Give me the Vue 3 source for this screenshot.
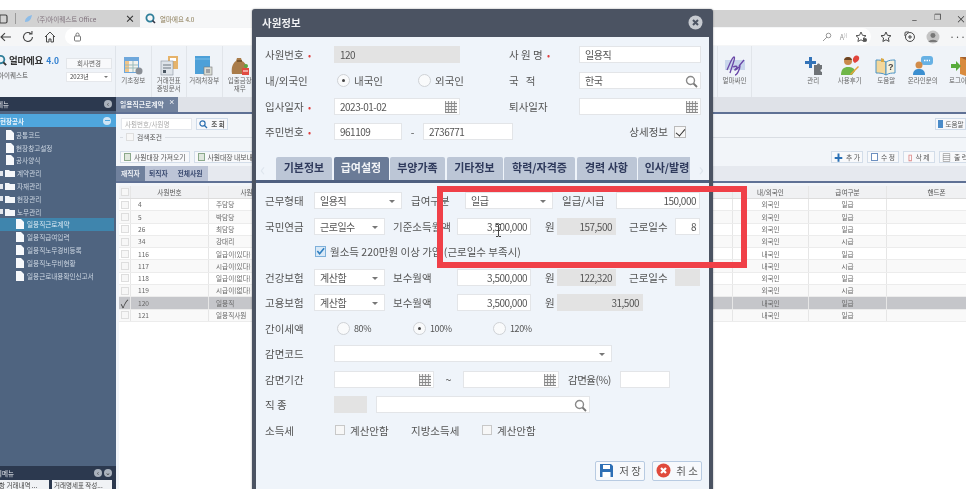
<script setup>
const tree = [
  { t: '공통코드', k: 'doc1' }, { t: '현장창고설정', k: 'doc1' }, { t: '공사양식', k: 'doc1' },
  { t: '계약관리', k: 'dir' }, { t: '자재관리', k: 'dir' }, { t: '현장관리', k: 'dir' }, { t: '노무관리', k: 'dir' },
  { t: '일용직근로계약', k: 'doc2', on: true }, { t: '일용직급여입력', k: 'doc2' }, { t: '일용직노무경비등록', k: 'doc2' },
  { t: '일용직노무비현황', k: 'doc2' }, { t: '일용근로내용확인신고서', k: 'doc2' }
]
const rows = [
  ['4', '주담당', '외국인', '일급'], ['5', '박담당', '외국인', '일급'], ['26', '최담당', '외국인', '일급'],
  ['34', '강대리', '외국인', '시급'], ['116', '일급이(있다)', '내국인', '일급'], ['117', '시급이(있다)', '내국인', '시급'],
  ['118', '일급이(없다)', '외국인', '일급'], ['119', '시급이(없다)', '외국인', '시급'],
  ['120', '일용직', '내국인', '일급'], ['121', '일용직사원', '내국인', '일급']
]
const tabs = [
  { t: '기본정보', c: 'tw1' }, { t: '급여설정', c: 'tw2 on' }, { t: '부양가족', c: 'tw3' }, { t: '기타정보', c: 'tw4' },
  { t: '학력/자격증', c: 'tw5' }, { t: '경력 사항', c: 'tw6' }, { t: '인사/발령', c: 'tw7' }
]
</script>

<template>
  <div class="screen">
    <div class="topgap"></div>
    <div class="tabbar">
      <svg class="tabicon" width="12" height="10" viewBox="0 0 12 10"><rect x="1" y="1" width="10" height="8" rx="1.5" fill="none" stroke="#444" stroke-width="1.2"/><path d="M4 1v8" stroke="#444"/></svg>
      <i class="tabsep"></i>
      <div class="btab">
        <svg width="10" height="10" viewBox="0 0 10 10"><path d="M2 8c0-4 3-6 7-7-1 4-2 7-7 7z" fill="#8cbce8"/></svg>
        <span>(주)아이퀘스트 Office</span><b>×</b>
      </div>
      <div class="btab act">
        <svg width="11" height="11" viewBox="0 0 11 11"><circle cx="5" cy="5" r="3.6" fill="none" stroke="#2f7f9a" stroke-width="1.8"/><path d="M7.5 7.5L10 10" stroke="#334" stroke-width="1.6"/></svg>
        <span>얼마에요 4.0</span>
      </div>
      <div class="winbtns"><span>–</span><span class="rst">❐</span><span>×</span></div>
    </div>
    <div class="toolbar">
      <svg width="14" height="12" viewBox="0 0 14 12"><path d="M12 6H2M6 2L2 6l4 4" fill="none" stroke="#444" stroke-width="1.1"/></svg>
      <svg width="14" height="14" viewBox="0 0 14 14"><path d="M11.5 7a4.5 4.5 0 1 1-1.3-3.2M11 1v3H8" fill="none" stroke="#444" stroke-width="1.1"/></svg>
      <svg width="14" height="14" viewBox="0 0 14 14"><path d="M2 7l5-5 5 5M3.5 6v6h2.5V9h2v3h2.500V6" fill="none" stroke="#444" stroke-width="1"/></svg>
      <div class="addr">
        <svg width="9" height="10" viewBox="0 0 9 10"><rect x="1.500" y="4" width="6" height="5" rx="1" fill="none" stroke="#777"/><path d="M3 4V2.500a1.500 1.500 0 0 1 3 0V4" fill="none" stroke="#777"/></svg>
        <span class="grow"></span>
        <svg width="10" height="10" viewBox="0 0 10 10"><circle cx="6.500" cy="3.500" r="2.300" fill="none" stroke="#999"/><path d="M5 5L1 9" stroke="#999"/></svg>
        <span class="aa">A<sup>))</sup></span>
        <svg width="13" height="12" viewBox="0 0 13 12"><path d="M6 1l1.500 3.300 3.500.4-2.600 2.300.7 3.500L6 8.800 2.900 10.500l.7-3.500L1 4.700l3.500-.4z" fill="none" stroke="#555"/><circle cx="10" cy="9" r="2" fill="#555"/></svg>
      </div>
      <svg class="rt1" width="13" height="12" viewBox="0 0 13 12"><path d="M6 1l1.500 3.300 3.500.4-2.600 2.300.7 3.500L6 8.800 2.900 10.500l.7-3.500L1 4.700l3.500-.4z" fill="none" stroke="#444"/></svg>
      <svg class="rt2" width="13" height="13" viewBox="0 0 13 13"><circle cx="7" cy="7" r="4.500" fill="none" stroke="#444"/><path d="M2 6V3a1 1 0 0 1 1-1h3M7 5v4M5 7h4" fill="none" stroke="#444"/></svg>
      <svg class="rt3" width="14" height="14" viewBox="0 0 14 14"><circle cx="7" cy="7" r="6.500" fill="#c4c4c4"/><circle cx="7" cy="5.500" r="2.500" fill="#777"/><path d="M2.500 12c1-3 8-3 9 0z" fill="#777"/></svg>
      <span class="dots">···</span>
    </div>

    <header class="apphead">
      <div class="logo">
        <div class="logomain">
          <svg width="12" height="12" viewBox="0 0 13 13"><circle cx="5" cy="6" r="4" fill="none" stroke="#2f7f9a" stroke-width="2"/><path d="M8 9l3 3" stroke="#333" stroke-width="2"/></svg>
          <strong>얼마에요</strong><em>4.0</em>
        </div>
        <div class="logosub">아이퀘스트</div>
        <div class="logobtns">
          <span class="lbtn">회사변경</span>
          <span class="lsel">2023년<i class="car small"></i></span>
        </div>
      </div>
      <div class="hitem">
        <svg width="22" height="20" viewBox="0 0 22 20"><rect x="2" y="1" width="15" height="16" fill="#6fa8dc"/><path d="M3 5h13v11H3z" fill="#f2f2ee"/><path d="M3 5h4v11H3z" fill="#f0c58a"/><path d="M3 9h13M3 12h13M11 5v11" stroke="#9bb"/><circle cx="17" cy="15" r="3.500" fill="#8a8f96"/></svg>
        <span>기초정보</span>
      </div>
      <div class="hitem">
        <svg width="22" height="20" viewBox="0 0 22 20"><rect x="10" y="0" width="10" height="13" fill="#e6b36a"/><rect x="12" y="2" width="6" height="3" fill="#fff"/><rect x="3" y="5" width="12" height="14" fill="#dfe4ea" stroke="#8a939e" stroke-width=".6"/><path d="M5 9h8M5 12h8" stroke="#6c7680"/><rect x="5" y="14" width="3" height="3" fill="#4a5662"/></svg>
        <span>거래전표<br>증빙문서</span>
      </div>
      <div class="hitem">
        <svg width="22" height="20" viewBox="0 0 22 20"><rect x="2" y="0" width="15" height="18" fill="#4da0d8"/><path d="M2 3h15" stroke="#7cc0ea"/><rect x="11" y="11" width="8" height="8" fill="#d9dcd4" stroke="#777" stroke-width=".6"/><path d="M13 14h4M13 16h4" stroke="#667"/></svg>
        <span>거래처장부</span>
      </div>
      <div class="hitem">
        <svg width="22" height="20" viewBox="0 0 22 20"><path d="M8 2h4l1 3c4 2 6 6 5 13H3C2 11 4 7 7 5z" fill="#a97c4a"/><path d="M8 5h5" stroke="#6b4a24" stroke-width="1.500"/><rect x="13" y="12" width="7" height="7" fill="#e14b42"/><path d="M14 15h5" stroke="#fff"/><circle cx="17" cy="10" r="2" fill="#5aa544"/></svg>
        <span>입출금장<br>재무</span>
      </div>
      <div class="hgap"></div>
      <div class="hitem sign">
        <svg width="24" height="22" viewBox="0 0 24 22"><rect x="2" y="5" width="20" height="10" fill="#c9d6ec"/><path d="M4 15c3-6 5-13 7-13S8 14 7 18M10 12c2-1 4-1 4 0s-3 3-2 3 4-3 5-4c0 3-3 9-5 9M16 11l5-6" fill="none" stroke="#6a48a8" stroke-width="1.300"/></svg>
        <span>얼마싸인</span>
      </div>
      <div class="hgap2"></div>
      <div class="hitem plain">
        <svg width="22" height="20" viewBox="0 0 22 20"><path d="M7 1h3v4h4v3h-4v4H7V8H3V5h4z" fill="#3373b8"/><path d="M12 9h3c0-2 3-2 3 0h2v4c-2 0-2 3 0 3v3h-8z" fill="#6f7377"/></svg>
        <span>관리</span>
      </div>
      <div class="hitem plain">
        <svg width="22" height="22" viewBox="0 0 22 22"><path d="M15 2c1-2 4-2 5 0 1 3-2 5-4 6-2-1-3-4-1-6z" fill="#e1443c"/><circle cx="9" cy="6" r="4" fill="#c98a4c"/><path d="M5 5c1-4 7-4 8 0z" fill="#6b4424"/><path d="M2 20c0-6 3-8 7-8s6 1 7 4l-3 4z" fill="#6fb648"/><path d="M11 19l8-8 1 1-8 8z" fill="#e8a33c"/></svg>
        <span>사용후기</span>
      </div>
      <div class="hitem plain">
        <svg width="22" height="20" viewBox="0 0 22 20"><path d="M1 4c3 0 7 0 10 2v13c-3-2-7-2-10-2z" fill="#f3d79a" stroke="#4b93c4"/><path d="M11 6c3-2 6-2 9-2v13c-3 0-6 0-9 2z" fill="#f6f1de" stroke="#4b93c4"/><path d="M6 2l3 1v3H6z" fill="#d9a744"/><text x="13" y="14" font-size="9" font-weight="700" fill="#444" font-family="Liberation Sans">?</text></svg>
        <span>도움말</span>
      </div>
      <div class="hitem plain">
        <svg width="22" height="20" viewBox="0 0 22 20"><rect x="9" y="0" width="12" height="9" rx="3" fill="#67b1e4"/><path d="M12 4.500h6" stroke="#fff" stroke-dasharray="1.500 1" stroke-width="1.500"/><circle cx="7" cy="9" r="3.500" fill="#d28c4a"/><path d="M1 19c0-5 3-6 6-6s6 1 6 6z" fill="#3b8fd0"/></svg>
        <span>온라인문의</span>
      </div>
      <div class="hitem plain last">
        <svg width="22" height="20" viewBox="0 0 22 20"><rect x="10" y="1" width="10" height="17" fill="#a3612f"/><path d="M10 1l6 3v16l-6-2z" fill="#d98b3e"/><path d="M1 8h5V5l5 5-5 5v-3H1z" fill="#58ab3c"/></svg>
        <span>로그아웃</span>
      </div>
    </header>

    <div class="body">
      <aside class="side">
        <div class="sidehead"><span>메뉴</span><i class="roundbtn">‹</i></div>
        <div class="sidesel"><span>현장공사</span><i class="minus"></i></div>
        <ul class="tree">
          <li v-for="n in tree" :key="n.t" :class="[n.k, { on: n.on }]">
            <svg v-if="n.k === 'dir'" width="10" height="8" viewBox="0 0 10 8"><path d="M0 1h4l1 1h5v6H0z" fill="#f4f6f9"/></svg>
            <svg v-else width="8" height="10" viewBox="0 0 8 10"><path d="M0 0h5l3 3v7H0z" fill="#f6f8fb"/></svg>
            <span>{{ n.t }}</span>
          </li>
        </ul>
        <div class="sideend">
          <div class="sidehead2"><span>회메뉴</span><i class="roundbtn">‹</i><i class="roundbtn">⌄</i></div>
          <div class="sidebtns"><span>항 거래내역 ...</span><span>거래명세표 작성...</span></div>
        </div>
      </aside>

      <main class="main">
        <div class="mtabs"><div class="mtab">일용직근로계약<sup>×</sup></div></div>
        <div class="search">
          <span class="sinput">사원번호/사원명</span>
          <span class="sbtn">
            <svg width="9" height="9" viewBox="0 0 9 9"><circle cx="3.500" cy="3.500" r="2.600" fill="none" stroke="#2b6fb0" stroke-width="1.200"/><path d="M5.500 5.500L8 8" stroke="#2b6fb0" stroke-width="1.200"/></svg>
            조 회
          </span>
          <span class="grow"></span>
          <span class="sbtn help"><i class="book"></i>도움말</span>
        </div>
        <div class="legend"><i class="cb"></i><span>검색조건</span><em></em></div>
        <div class="actions">
          <span class="abtn"><i class="xls"></i>사원대장 가져오기</span>
          <span class="abtn"><i class="xls"></i>사원대장 내보내기</span>
          <span class="grow"></span>
          <span class="abtn a2"><b class="plus">✚</b>추 가</span>
          <span class="abtn a2"><i class="ed"></i>수 정</span>
          <span class="abtn a2"><b class="trash">▯</b>삭 제</span>
          <span class="abtn a2 pr"><b class="plus grey">▤</b>출 력</span>
        </div>
        <div class="gtabs">
          <span class="gt on">재직자</span><span class="gt">퇴직자</span><span class="gt w">전체사원</span>
        </div>
        <div class="grid">
          <div class="gr gh">
            <span><i class="cb"></i></span><span>사원번호</span><span>사원명</span><span></span><span></span><span>내/외국인</span><span>급여구분</span><span>핸드폰</span>
          </div>
          <div v-for="r in rows" :key="r[0]" class="gr" :class="{ sel: r[0] === '120' }">
            <span><i v-if="r[0] !== '120'" class="cb"></i><b v-else class="tick">✓</b></span>
            <span class="lft">{{ r[0] }}</span><span class="lft">{{ r[1] }}</span><span></span><span></span>
            <span>{{ r[2] }}</span><span>{{ r[3] }}</span><span></span>
          </div>
        </div>
      </main>
    </div>

    <section class="modal">
      <div class="mhead"><span>사원정보</span><svg width="15" height="15" viewBox="0 0 15 15"><circle cx="7.500" cy="7.500" r="7" fill="#c6cad0"/><path d="M5 5l5 5M10 5l-5 5" stroke="#4b5362" stroke-width="2"/></svg></div>
      <div class="mbody">
        <div class="top">
          <div class="row">
            <label class="l69">사원번호 <u>•</u></label><span class="f gray w126">120</span>
            <label class="l70 ml49">사 원 명 <u>•</u></label><span class="f w122">일용직</span>
          </div>
          <div class="row">
            <label class="l69">내/외국인</label>
            <span class="radio w83"><i class="rd on"></i>내국인</span><span class="radio w92"><i class="rd"></i>외국인</span>
            <label class="l70">국 &nbsp; 적</label>
            <span class="f w122">한국<svg class="mag" width="13" height="13" viewBox="0 0 13 13"><circle cx="5.500" cy="5.500" r="4" fill="none" stroke="#8a8a8a" stroke-width="1.400"/><path d="M8.500 8.500L12 12" stroke="#777" stroke-width="1.800"/></svg></span>
          </div>
          <div class="row">
            <label class="l69">입사일자 <u>•</u></label><span class="f w126">2023-01-02<i class="cal"></i></span>
            <label class="l70 ml49">퇴사일자</label><span class="f w122"><i class="cal"></i></span>
          </div>
          <div class="row">
            <label class="l69">주민번호 <u>•</u></label><span class="f w68">961109</span>
            <span class="dash">-</span><span class="f w90">2736771</span>
            <span class="grow"></span><label class="detail">상세정보</label><i class="chk"></i>
          </div>
        </div>

        <div class="tabstrip">
          <span class="arrow">‹</span>
          <div class="tabset">
            <span v-for="t in tabs" :key="t.t" class="tab" :class="t.c">{{ t.t }}</span>
          </div>
          <span class="arrow">›</span>
        </div>

        <div class="pay">
          <div class="row r1">
            <label class="l49">근무형태</label><span class="f sel w88">일용직<i class="car"></i></span>
            <label class="l54 ml9">급여구분</label><span class="f sel w88">일급<i class="car"></i></span>
            <label class="l54 ml9">일급/시급</label><span class="f num w84">150,000</span>
          </div>
          <div class="row r2">
            <label class="l49">국민연금</label><span class="f sel w71">근로일수<i class="car"></i></span>
            <label class="l64 ml8">기준소득월액</label><span class="f num w74">3,500,000</span>
            <span class="won">원</span><span class="f num gray w59">157,500</span>
            <label class="l46 ml13">근로일수</label><span class="f num w25">8</span>
          </div>
          <div class="row r3">
            <i class="bluechk"><svg width="10" height="10" viewBox="0 0 10 10"><path d="M1.500 5l2.500 3 5-6" fill="none" stroke="#2f7fc0" stroke-width="1.800"/></svg></i>
            <span class="note">월소득 220만원 이상 가입 (근로일수 부족시)</span>
          </div>
          <div class="row r4">
            <label class="l49">건강보험</label><span class="f sel w71">계산함<i class="car"></i></span>
            <label class="l64 ml8">보수월액</label><span class="f num w74">3,500,000</span>
            <span class="won">원</span><span class="f num gray w59">122,320</span>
            <label class="l46 ml13">근로일수</label><span class="f gray w25"></span>
          </div>
          <div class="row r5">
            <label class="l49">고용보험</label><span class="f sel w71">계산함<i class="car"></i></span>
            <label class="l64 ml8">보수월액</label><span class="f num w74">3,500,000</span>
            <span class="won">원</span><span class="f num gray w86">31,500</span>
          </div>
        </div>

        <div class="lower">
          <div class="row tax">
            <label class="l69">간이세액</label>
            <span class="radio small w76"><i class="rd"></i>80%</span>
            <span class="radio small w80"><i class="rd on"></i>100%</span>
            <span class="radio small"><i class="rd"></i>120%</span>
          </div>
          <div class="row">
            <label class="l69">감면코드</label><span class="f sel w278"><i class="car"></i></span>
          </div>
          <div class="row">
            <label class="l69">감면기간</label><span class="f w100"><i class="cal"></i></span>
            <span class="tilde">~</span><span class="f w96"><i class="cal"></i></span>
            <label class="rate">감면율(%)</label><span class="f w50"></span>
          </div>
          <div class="row">
            <label class="l69">직 종</label><span class="f gray w33"></span>
            <span class="f wsearch"><svg class="mag" width="13" height="13" viewBox="0 0 13 13"><circle cx="5.500" cy="5.500" r="4" fill="none" stroke="#8a8a8a" stroke-width="1.400"/><path d="M8.500 8.500L12 12" stroke="#777" stroke-width="1.800"/></svg></span>
          </div>
          <div class="row income">
            <label class="l69">소득세</label>
            <i class="mini"></i><span class="t61">계산안함</span>
            <label class="t71">지방소득세</label>
            <i class="mini"></i><span>계산안함</span>
          </div>
        </div>

        <div class="foot">
          <span class="fbtn"><svg width="15" height="15" viewBox="0 0 15 15"><path d="M1 1h11l2 2v11H1z" fill="#2d6fb5"/><rect x="4" y="2" width="7" height="4" fill="#fff"/><rect x="3.500" y="9" width="8" height="5" fill="#fff"/></svg>저 장</span>
          <span class="fbtn"><svg width="15" height="15" viewBox="0 0 15 15"><circle cx="7.500" cy="7.500" r="7" fill="#e04a3c"/><path d="M5 5l5 5M10 5l-5 5" stroke="#fff" stroke-width="2.200"/></svg>취 소</span>
        </div>
      </div>
    </section>

    <div class="redbox"></div>
    <svg class="ibeam" width="7" height="13" viewBox="0 0 7 13"><path d="M1 .5h2l.5.500.5-.500h2M3.500 1v11M1 12.500h2l.5-.500.5.500h2M2 6.500h3" fill="none" stroke="#444"/></svg>
  </div>
</template>

<style>
html, body { margin: 0; background: #fff; }
</style>

<style scoped>
* { box-sizing: border-box; }
.screen { position: relative; width: 966px; height: 489px; overflow: hidden; background: #fff; font-family: "Noto Sans CJK KR", "Noto Sans", sans-serif; font-size: 10px; color: #555; filter: blur(.5px); }
.grow { flex: 1; }
i, b, em, u { font-style: normal; text-decoration: none; }
.topgap { height: 10px; }
.tabbar { display: flex; align-items: center; height: 17px; background: #d2d2d2; }
.tabicon { margin-left: -4px; }
.tabsep { width: 1px; height: 11px; background: #9a9a9a; margin: 0 5px 0 7px; }
.btab { display: flex; align-items: center; gap: 4px; width: 119px; height: 100%; padding-left: 2px; font-size: 6.500px; color: #7d6f7a; }
.btab span { flex: 1; }
.btab b { margin-right: 5px; color: #333; font-size: 10px; }
.btab.act { background: #f6f7f8; width: 115px; padding-left: 5px; color: #8a7b55; }
.winbtns { margin-left: auto; display: flex; gap: 14px; font-size: 10px; color: #333; padding-right: 1px; }
.winbtns span { width: 9px; text-align: center; }
.rst { font-size: 8px; }
.toolbar { display: flex; align-items: center; height: 19px; background: #f5f6f7; }
.toolbar > svg:nth-child(1) { margin-left: -1px; }
.toolbar > svg:nth-child(2) { margin-left: 8px; }
.toolbar > svg:nth-child(3) { margin-left: 8px; }
.addr { display: flex; align-items: center; gap: 8px; width: 810px; height: 17px; margin-left: 8px; padding: 0 3px 0 8px; background: #fff; border-radius: 9px; }
.aa { font-size: 7px; color: #999; }
.aa sup { font-size: 5px; }
.rt1 { margin-left: 9px; }
.rt2 { margin-left: 10px; }
.rt3 { margin-left: 10px; }
.dots { margin-left: 9px; font-size: 10px; color: #444; }

.apphead { display: flex; height: 51px; background: #eff3f8; }
.logo { position: relative; width: 116px; flex: none; border-right: 1px solid #dfe4ea; }
.logomain { position: absolute; left: -4px; top: 7px; display: flex; align-items: center; gap: 1px; white-space: nowrap; }
.logomain strong { font-size: 9.500px; color: #333; letter-spacing: -.2px; }
.logomain em { font-size: 8.500px; font-weight: 700; color: #2f7fd0; margin-left: 2px; }
.logosub { position: absolute; left: -2px; top: 24px; font-size: 6.500px; color: #555; }
.logobtns { position: absolute; left: 66px; top: 12px; display: flex; flex-direction: column; gap: 3px; width: 46px; }
.lbtn { height: 11px; background: #f8f9fb; border: 1px solid #e3e6ea; font-size: 6.500px; line-height: 9px; text-align: center; color: #666; }
.lsel { position: relative; height: 10px; background: #fff; border: 1px solid #e6e8ec; font-size: 6px; line-height: 8px; padding-left: 3px; color: #444; }
.hitem { display: flex; flex-direction: column; align-items: center; width: 35.500px; flex: none; padding-top: 9px; border-right: 1px solid #e1e5ea; font-size: 6.500px; line-height: 7.500px; text-align: center; color: #666; white-space: nowrap; }
.hitem svg { height: 22px; }
.hgap { width: 459px; flex: none; }
.hitem.sign { width: 35px; border-left: 1px solid #e1e5ea; }
.hgap2 { width: 43px; flex: none; }
.hitem.plain { width: 36.500px; border: 0; }
.hitem.plain.last { width: 40px; }

.body { display: flex; height: 392px; }
.side { display: flex; flex-direction: column; width: 116px; flex: none; background: #4f6480; color: #cfd8e3; }
.sidehead { display: flex; align-items: center; justify-content: space-between; height: 14px; background: #2c394f; padding: 0 4px 0 0; font-size: 6.500px; color: #e6e9ee; }
.sidehead span { margin-left: -3px; }
.roundbtn { display: block; width: 8px; height: 8px; border-radius: 50%; background: #aab2bd; color: #333; font-size: 7px; line-height: 7px; text-align: center; }
.sidesel { display: flex; align-items: center; justify-content: space-between; height: 13px; margin-top: 3px; background: #4fa6dd; padding: 0 5px 0 0; font-size: 6.500px; font-weight: 700; color: #e8f3fb; }
.minus { position: relative; width: 8px; height: 8px; border-radius: 50%; background: #cfe5f5; }
.minus::after { content: ""; position: absolute; left: 1.500px; top: 3.500px; width: 5px; height: 1px; background: #4fa6dd; }
.tree { list-style: none; margin: 1.500px 0 0; padding: 0; font-size: 6.600px; }
.tree li { display: flex; align-items: center; gap: 2px; height: 12.800px; white-space: nowrap; }
.tree .doc1 { padding-left: 6px; }
.tree .dir { padding-left: 5px; position: relative; }
.tree .dir::before { content: ""; position: absolute; left: -2px; top: 4px; width: 5px; height: 5px; background: #e2e6ec; }
.tree .doc2 { padding-left: 16px; gap: 3px; }
.tree .on { background: #3f85ad; margin-right: 2px; color: #dbe9f3; }
.sideend { margin-top: auto; }
.sidehead2 { display: flex; align-items: center; gap: 2px; height: 14px; background: #2c394f; padding: 0 4px 0 0; font-size: 6.500px; color: #e6e9ee; }
.sidehead2 span { flex: 1; margin-left: -4px; }
.sidebtns { display: flex; gap: 3px; height: 9px; background: #2c394f; color: #444; font-size: 6.500px; line-height: 10px; white-space: nowrap; overflow: hidden; }
.sidebtns span { background: #f0f2f5; padding-left: 2px; }
.sidebtns span:first-child { width: 52px; margin-left: -3px; }
.sidebtns span:last-child { width: 60px; }

.main { flex: 1; min-width: 0; background: #f2f5f9; }
.mtabs { height: 17px; background: #dfe2e8; border-bottom: 2px solid #5f7195; }
.mtab { width: 62px; height: 15px; padding-left: 4px; background: #70819d; color: #eef1f5; font-size: 6.800px; font-weight: 700; line-height: 14px; white-space: nowrap; }
.mtab sup { font-size: 6px; margin-left: 5px; line-height: 0; }
.search { display: flex; align-items: center; gap: 4px; height: 12px; margin-top: 4px; padding-left: 5px; }
.sinput { width: 71px; height: 12px; background: #fff; border: 1px solid #e4e7ec; font-size: 6.500px; line-height: 10px; padding-left: 3px; color: #aaa; }
.sbtn { display: flex; align-items: center; justify-content: center; gap: 3px; width: 32px; height: 12px; background: #f7f8fb; border: 1px solid #cfdbe9; font-size: 6.500px; font-weight: 700; color: #555; }
.sbtn.help { width: 31px; font-weight: 400; }
.book { width: 5px; height: 8px; background: #4a8bc9; }
.legend { display: flex; align-items: center; gap: 3px; height: 10px; margin-top: 2px; padding-left: 3px; font-size: 6.800px; color: #555; }
.legend em { flex: 1; height: 1px; background: #d9dde3; }
.legend::before { content: ""; width: 3px; height: 1px; background: #d9dde3; margin-left: 1px; }
.cb { display: block; width: 8px; height: 8px; background: #f7f7f7; border: 1px solid #dedede; }
.actions { display: flex; align-items: center; gap: 4px; height: 12px; margin-top: 9px; padding-left: 4px; }
.abtn { display: flex; align-items: center; gap: 3px; height: 12px; padding: 0 3px; background: #f8f9fb; border: 1px solid #d3dde9; font-size: 6.800px; color: #555; white-space: nowrap; }
.a2 { justify-content: center; width: 32px; }
.pr { margin-right: -5px; }
.xls { width: 7px; height: 8px; background: #dfe7dd; border: 1px solid #8aa88a; }
.plus { color: #2a70b5; font-size: 9px; line-height: 9px; }
.plus.grey { color: #777; }
.trash { color: #d88; font-size: 8px; line-height: 8px; }
.ed { width: 8px; height: 8px; background: #fff; border: 1px solid #6d90c0; }
.gtabs { display: flex; height: 17px; margin-top: 3px; background: #e6e9ef; border-bottom: 2px solid #5f7195; }
.gt { width: 27px; height: 15px; background: #bcc4d6; color: #3a4a70; font-size: 6.800px; font-weight: 700; line-height: 14px; text-align: center; }
.gt.on { width: 29px; background: #70819d; color: #eef1f5; }
.gt.w { width: 36px; }
.grid { height: 306px; margin-top: 3px; margin-left: 3px; background: #fff; font-size: 6.600px; color: #666; }
.gr { display: grid; grid-template-columns: 12px 78px 82px 442px 0 76px 78px 100px; height: 12.300px; align-items: stretch; text-align: center; border-bottom: 1px solid #ececec; }
.gr > span { display: flex; align-items: center; justify-content: center; border-right: 1px solid #e6e6e6; white-space: nowrap; line-height: 1; }
.gr > span:nth-child(5) { border: 0; }
.gr .lft { justify-content: flex-start; padding-left: 7px; }
.gr:nth-child(odd):not(.gh):not(.sel) { background: #f9f9f9; }
.gh { height: 13px; background: #f0f1f3; color: #555; border-bottom-color: #ddd; }
.sel { background: #c5c6ca; }
.tick { font-size: 11px; color: #444; font-weight: 400; }

.modal { position: absolute; left: 252px; top: 9px; width: 461px; height: 500px; background: #4b5362; border-radius: 3px 3px 0 0; padding: 0 4px; box-shadow: 0 0 2px rgba(0,0,0,.4); }
.mhead { display: flex; align-items: center; justify-content: space-between; height: 28px; padding: 0 6px 1px 6px; color: #f1f2f4; font-size: 10.500px; font-weight: 700; }
.mbody { height: 472px; background: #eff4fa; padding-top: 9px; font-size: 10.500px; color: #555; }
.row { display: flex; align-items: center; height: 17px; padding-left: 9px; white-space: nowrap; }
.top { display: flex; flex-direction: column; gap: 8.800px; }
label { flex: none; font-weight: 400; }
label u { color: #e04040; font-size: 9px; margin-left: 2px; }
.l69 { width: 69px; } .l70 { width: 70px; } .l49 { width: 49px; } .l54 { width: 54px; } .l64 { width: 64px; } .l46 { width: 46px; }
.ml49 { margin-left: 49px; } .ml9 { margin-left: 9px; } .ml8 { margin-left: 8px; } .ml13 { margin-left: 13px; }
.f { position: relative; display: flex; align-items: center; flex: none; height: 17px; padding-left: 5px; background: #fff; border: 1px solid #e3e5e8; font-size: 10px; letter-spacing: -.5px; color: #555; overflow: hidden; }
.f.gray { background: #e3e3e3; border-color: #e3e3e3; }
.num { justify-content: flex-end; padding: 0 3px 0 0; }
.w126 { width: 126px; } .w122 { width: 122px; } .w68 { width: 68px; } .w90 { width: 90px; } .w88 { width: 88px; } .w84 { width: 84px; }
.w71 { width: 71px; } .w74 { width: 74px; } .w59 { width: 59px; } .w25 { width: 25px; } .w86 { width: 86px; }
.w278 { width: 278px; } .w100 { width: 100px; } .w96 { width: 96px; } .w50 { width: 50px; } .w33 { width: 33px; } .wsearch { width: 214px; margin-left: 9px; }
.radio { display: flex; align-items: center; gap: 4px; flex: none; }
.w83 { width: 81px; margin-left: 3px; } .w92 { width: 91px; }
.w76 { width: 76px; } .w80 { width: 80px; }
.radio.small { font-size: 9px; letter-spacing: -.4px; margin-left: 0; }
.tax .radio:first-of-type { margin-left: 3px; }
.rd { position: relative; width: 13px; height: 13px; border-radius: 50%; background: #f9fafb; border: 1px solid #cfd2d6; flex: none; }
.rd.on::after { content: ""; position: absolute; left: 4px; top: 4px; width: 3px; height: 3px; background: #444; border-radius: 50%; }
.mag { position: absolute; right: 2px; top: 2px; }
.cal { position: absolute; right: 2px; top: 2px; width: 12px; height: 12px; background: repeating-linear-gradient(0deg, #888 0 1px, transparent 1px 3px), repeating-linear-gradient(90deg, #999 0 1px, #eee 1px 3px); }
.dash { width: 21px; text-align: center; margin-left: 0; flex: none; }
.detail { margin-right: 6px; }
.chk { position: relative; width: 12px; height: 12px; border: 1px solid #bbb; background: #f7f7f7; margin-right: 23px; }
.chk::after { content: ""; position: absolute; left: 3px; top: 0; width: 4px; height: 8px; border: solid #333; border-width: 0 1.500px 1.500px 0; transform: rotate(40deg); }

.tabstrip { display: flex; align-items: flex-start; height: 26px; margin-top: 17px; border-bottom: 3px solid #4f6080; padding-left: 20px; position: relative; }
.arrow { position: absolute; top: 2px; left: 4px; font-size: 18px; line-height: 18px; color: #dfe6ee; }
.arrow:last-child { left: auto; right: 5px; }
.tabset { display: flex; gap: 1.500px; width: 414px; overflow: hidden; }
.tab { flex: none; height: 23px; background: #bcc6d6; color: #2f3a5c; font-size: 11px; font-weight: 700; line-height: 21px; text-align: center; border-radius: 2px 2px 0 0; white-space: nowrap; }
.tab.on { background: #6a7b97; color: #f2f4f7; }
.tw1 { width: 56px; } .tw2 { width: 55px; } .tw3 { width: 55px; } .tw4 { width: 56px; } .tw5 { width: 71px; } .tw6 { width: 60px; } .tw7 { width: 58px; }
.pay { padding-top: 9px; }
.r2 { margin-top: 8.500px; }
.r3 { margin-top: 8px; padding-left: 59px; gap: 4px; font-size: 10.500px; height: 17px; }
.r4 { margin-top: 9px; }
.r5 { margin-top: 8px; }
.bluechk { display: flex; align-items: center; justify-content: center; width: 11px; height: 11px; background: #d9e9f7; border: 1px solid #7eb0da; }
.sel .car, .car { position: absolute; right: 6px; top: 7px; width: 0; height: 0; border: 3px solid transparent; border-top: 3px solid #777; border-bottom: 0; }
.car.small { right: 3px; top: 3px; border-width: 2px; border-bottom: 0; }
.won { width: 26px; flex: none; padding-left: 14px; }
.lower { display: flex; flex-direction: column; gap: 8.500px; padding-top: 9px; }
.tax { height: 17px; }
.tilde { width: 29px; text-align: center; flex: none; }
.rate { margin: 0 8px 0 9px; width: 44px; letter-spacing: -.5px; }
.mini { width: 10px; height: 10px; margin: 0 5px 0 1px; background: #f7f7f7; border: 1px solid #c8c8c8; flex: none; }
.t61 { width: 61px; flex: none; }
.t71 { width: 70px; }
.foot { display: flex; justify-content: flex-end; gap: 7px; padding: 22px 7px 0 0; }
.fbtn { display: flex; align-items: center; justify-content: center; gap: 5px; width: 50px; height: 20px; background: #f7f9fc; border: 1px solid #b8cbe2; border-radius: 2px; font-size: 10.500px; color: #555; }

.redbox { position: absolute; left: 437px; top: 186px; width: 310px; height: 82px; border: 6px solid #f04048; }
.ibeam { position: absolute; left: 495px; top: 224px; }
</style>
